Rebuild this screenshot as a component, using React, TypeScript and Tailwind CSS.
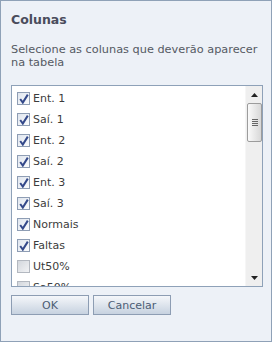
import { useState } from 'react';

const COLUMNS = [
  { label: 'Ent. 1', checked: true },
  { label: 'Saí. 1', checked: true },
  { label: 'Ent. 2', checked: true },
  { label: 'Saí. 2', checked: true },
  { label: 'Ent. 3', checked: true },
  { label: 'Saí. 3', checked: true },
  { label: 'Normais', checked: true },
  { label: 'Faltas', checked: true },
  { label: 'Ut50%', checked: false },
  { label: 'Sa50%', checked: false },
];

function CheckBox({ checked }: { checked: boolean }) {
  return (
    <span
      className={
        checked
          ? 'flex h-[13px] w-[13px] shrink-0 items-center justify-center border border-[#8e9db4] bg-gradient-to-br from-[#dfe5ee] to-[#fbfcfd]'
          : 'flex h-[13px] w-[13px] shrink-0 items-center justify-center border border-[#b3b8c0] bg-gradient-to-br from-[#d3d7dd] to-[#f2f3f5]'
      }
    >
      {checked && (
        <svg width="10" height="10" viewBox="0 0 10 10">
          <path d="M1.2 5 L3.8 8.6 L8.8 0.6" fill="none" stroke="#34498a" strokeWidth="2" />
        </svg>
      )}
    </span>
  );
}

export default function App() {
  const [cols, setCols] = useState(COLUMNS);

  const toggle = (i: number) => {
    setCols(cols.map((c, idx) => (idx === i ? { ...c, checked: !c.checked } : c)));
  };

  return (
    <div className="h-[342px] w-[272px] border border-[#8fa1b7] bg-[#edf1f7] font-['DejaVu_Sans',sans-serif]">
      {/* Title */}
      <h2 className="ml-[10px] mt-[11px] text-[12.5px] font-bold leading-[16px] text-[#4a4c5c]">
        Colunas
      </h2>

      {/* Description */}
      <p className="ml-[10px] mt-[15px] w-[252px] text-[11.3px] leading-[13px] text-[#555a63]">
        Selecione as colunas que deverão aparecer na tabela
      </p>

      {/* List box */}
      <div className="ml-[10px] mt-[16px] flex h-[202px] w-[252px] border border-[#8ea1b8] bg-white">
        <div className="flex-1 overflow-hidden pl-[5px] pt-[2px]">
          {cols.map((c, i) => (
            <div
              key={c.label}
              onClick={() => toggle(i)}
              className="flex h-[21px] cursor-default items-center gap-[3px] text-[11px] text-[#3c3c3c]"
            >
              <CheckBox checked={c.checked} />
              <span className="pt-[1px]">{c.label}</span>
            </div>
          ))}
        </div>

        {/* Scrollbar */}
        <div className="flex w-[17px] flex-col items-center border-l border-[#f6f6f6] bg-[#efefef]">
          <div className="flex h-[17px] w-full items-center justify-center">
            <svg width="7" height="4" viewBox="0 0 7 4">
              <path d="M0 4 L3.5 0 L7 4 Z" fill="#222" />
            </svg>
          </div>
          <div className="ml-[1px] flex h-[39px] w-[15px] flex-col items-center justify-center gap-[1px] rounded-[2px] border border-[#9c9c9c] bg-gradient-to-r from-[#fafafa] to-[#d8d8d8]">
            <span className="h-px w-[6px] bg-[#666]" />
            <span className="h-px w-[6px] bg-[#666]" />
            <span className="h-px w-[6px] bg-[#666]" />
            <span className="h-px w-[6px] bg-[#666]" />
          </div>
          <div className="flex-1" />
          <div className="flex h-[17px] w-full items-center justify-center">
            <svg width="7" height="4" viewBox="0 0 7 4">
              <path d="M0 0 L3.5 4 L7 0 Z" fill="#222" />
            </svg>
          </div>
        </div>
      </div>

      {/* Buttons */}
      <div className="ml-[10px] mt-[8px] flex gap-[4px]">
        <button className="h-[20px] w-[78px] border border-[#8d9db3] bg-gradient-to-b from-[#f5f7fa] to-[#c7d2e0] text-[11px] leading-none text-[#4c5d75]">
          OK
        </button>
        <button className="h-[20px] w-[78px] border border-[#8d9db3] bg-gradient-to-b from-[#f5f7fa] to-[#c7d2e0] text-[11px] leading-none text-[#4c5d75]">
          Cancelar
        </button>
      </div>
    </div>
  );
}
